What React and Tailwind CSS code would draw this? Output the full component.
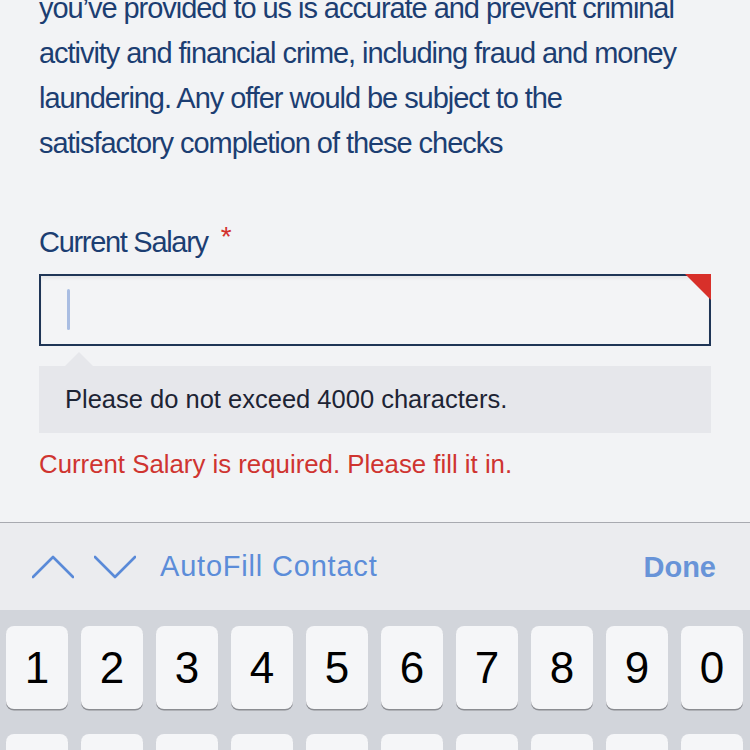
import React from 'react';

const body = { fontFamily: '"Liberation Sans", Arial, sans-serif' };
const ui = { fontFamily: '"Liberation Sans", Arial, sans-serif' };

const paragraph = [
  'you’ve provided to us is accurate and prevent criminal',
  'activity and financial crime, including fraud and money',
  'laundering. Any offer would be subject to the',
  'satisfactory completion of these checks',
];

const digits = ['1', '2', '3', '4', '5', '6', '7', '8', '9', '0'];
const secondRow = ['a', 'b', 'c', 'd', 'e', 'f', 'g', 'h', 'i', 'j'];

function Chevron({ down }) {
  return (
    <svg width="42" height="24" viewBox="0 0 42 24" fill="none">
      <polyline
        points={down ? '1,2 21,22 41,2' : '1,22 21,2 41,22'}
        stroke="#5a8ad8"
        strokeWidth="2.6"
        strokeLinecap="round"
        strokeLinejoin="round"
      />
    </svg>
  );
}

function Key({ label }) {
  return (
    <div className="flex h-[83px] items-center justify-center rounded-[8px] bg-[#f5f6f8] text-[44px] text-black shadow-[0_1.5px_0_#8b8d92]" style={ui}>
      {label}
    </div>
  );
}

function FormArea() {
  return (
    <div className="h-[522px] overflow-hidden bg-[#f2f3f5] px-[39px]">
      <p className="-mt-[14px] text-[29px] leading-[45px] tracking-[-1.05px] text-[#1c3e72]" style={body}>
        {paragraph.map((line) => (
          <span key={line} className="block whitespace-nowrap">{line}</span>
        ))}
      </p>

      <label className="mt-[58px] flex h-[36px] items-center text-[29px] leading-[36px] tracking-[-1.3px] text-[#1c3e72]" style={body}>
        Current Salary
        <span className="ml-[13px] -mt-[10px] text-[28px] text-[#d3302c]">*</span>
      </label>

      <div className="relative mt-[14px] h-[72px] border-2 border-[#1f3556] bg-[#f3f4f6] shadow-[inset_0_3px_3px_rgba(0,0,0,0.05)]">
        <div className="absolute left-[26px] top-[13px] h-[41px] w-[3px] rounded-sm bg-[#a9bde2]" />
        <div className="absolute -right-[2px] -top-[2px] h-0 w-0 border-l-[26px] border-t-[26px] border-l-transparent border-t-[#d8302a]" />
      </div>

      <div className="ml-[26px] mt-[6px] h-0 w-0 border-x-[14px] border-b-[14px] border-x-transparent border-b-[#e6e7eb]" />
      <div className="flex h-[67px] items-center bg-[#e6e7eb] px-[26px] text-[25.5px] text-[#1d2434]" style={ui}>
        Please do not exceed 4000 characters.
      </div>

      <div className="mt-[13px] text-[25.8px] leading-[36px] text-[#cf3430]" style={ui}>
        Current Salary is required. Please fill it in.
      </div>
    </div>
  );
}

function Toolbar() {
  return (
    <div className="flex h-[88px] items-center border-t border-[#a8aab0] bg-[#ebecef] pl-[32px] pr-[34px]">
      <Chevron />
      <div className="ml-[20px]">
        <Chevron down />
      </div>
      <span className="ml-[24px] text-[29px] tracking-[0.8px] text-[#5c8dd9]" style={ui}>
        AutoFill Contact
      </span>
      <span className="ml-auto mt-[3px] text-[29px] font-bold text-[#6894d8]" style={ui}>
        Done
      </span>
    </div>
  );
}

export default function App() {
  return (
    <div className="h-[750px] w-[750px] overflow-hidden bg-[#d2d5db]">
      <FormArea />
      <Toolbar />
      <div className="grid grid-cols-10 gap-x-[13px] gap-y-[25px] pl-[6px] pr-[7px] pt-[16px]">
        {digits.map((d) => (
          <Key key={d} label={d} />
        ))}
        {secondRow.map((k) => (
          <Key key={k} />
        ))}
      </div>
    </div>
  );
}
